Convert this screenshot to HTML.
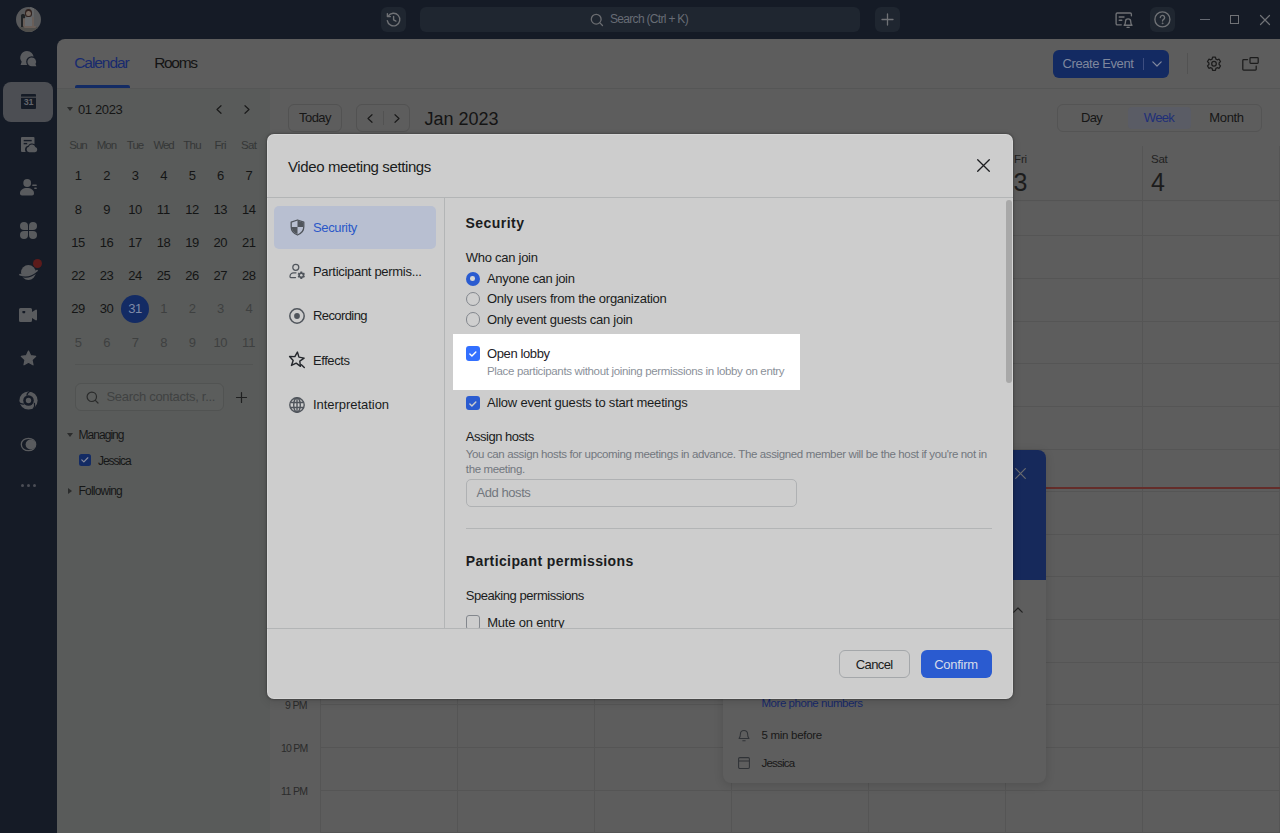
<!DOCTYPE html>
<html lang="en"><head>
<meta charset="utf-8">
<title>Video meeting settings</title>
<style>
*{box-sizing:border-box;margin:0;padding:0}
html,body{width:1280px;height:833px;overflow:hidden;background:#151b26}
body{position:relative;font-family:"Liberation Sans",sans-serif;color:#171717;-webkit-font-smoothing:antialiased}
.a{position:absolute}
.t{position:absolute;white-space:nowrap;line-height:20px;height:20px;font-size:13px}
svg{position:absolute;overflow:visible}
/* ---- app chrome ---- */
#main{left:57px;top:39px;width:1223px;height:794px;background:#5d5d5d;border-top-left-radius:8px;overflow:hidden}
#left{left:0;top:50px;width:213px;height:744px;background:#595b5a}
.hl{position:absolute;height:1px;background:#555555}
.vl{position:absolute;width:1px;background:#555555}
.ic{fill:#595b5e}
.tb{position:absolute;background:#1f2630;border-radius:6px}
/* ---- modal ---- */
#modal{left:267px;top:134px;width:746px;height:565px;background:#cdcdcd;border-radius:7px;box-shadow:inset 0 0 0 1px rgba(255,255,255,.18),0 0 2px 1px rgba(0,0,0,.2),0 3px 10px rgba(0,0,0,.12)}
.m{color:#1a1c20}
.g{color:#72777e}
</style>
</head>
<body>

<!-- ================= TITLE BAR ================= -->
<div class="tb" style="left:381px;top:7px;width:25px;height:25px"></div>
<div class="tb" style="left:420px;top:7px;width:440px;height:25px"></div>
<div class="tb" style="left:875px;top:7px;width:25px;height:25px"></div>
<div class="tb" style="left:1150px;top:7px;width:25px;height:25px"></div>
<div class="t" style="left: 610px; top: 9px; font-size: 12px; color: rgb(103, 108, 117); letter-spacing: -0.69px;">Search (Ctrl + K)</div>


<!-- title bar icons -->
<svg style="left:385px;top:11px" width="17" height="17" viewBox="0 0 17 17" fill="none" stroke="#707276" stroke-width="1.4" stroke-linecap="round" stroke-linejoin="round">
  <path d="M3.2 5.2A6.3 6.3 0 1 1 2.3 9.6"></path><path d="M2.4 2.6v3h3"></path><path d="M8.6 5.4v3.4l2.3 1.3"></path>
</svg>
<svg style="left:590px;top:13px" width="14" height="14" viewBox="0 0 14 14" fill="none" stroke="#6a6c70" stroke-width="1.3" stroke-linecap="round">
  <circle cx="6.2" cy="6.2" r="4.9"></circle><path d="M9.9 9.9l2.6 2.6"></path>
</svg>
<svg style="left:881px;top:13px" width="13" height="13" viewBox="0 0 13 13" fill="none" stroke="#707276" stroke-width="1.3" stroke-linecap="round">
  <path d="M6.5 1v11M1 6.5h11"></path>
</svg>
<svg style="left:1115px;top:12px" width="18" height="16" viewBox="0 0 18 16" fill="none" stroke="#707276" stroke-width="1.350" stroke-linecap="round" stroke-linejoin="round">
  <path d="M6.300 12.800H2.300a1.200 1.200 0 0 1-1.200-1.200V2.200A1.200 1.200 0 0 1 2.300 1h12.900a1.200 1.200 0 0 1 1.200 1.200v1.500"></path><path d="M4.200 5h4.800M4.200 8.200h2.600"></path>
  <path d="M9.200 13.200h7.800c-1-.900-1.300-1.900-1.300-3.800a2.600 2.600 0 0 0-5.200 0c0 1.900-.300 2.900-1.300 3.800z"></path><path d="M12 15.300h2.200"></path>
</svg>
<svg style="left:1154px;top:11px" width="17" height="17" viewBox="0 0 17 17" fill="none" stroke="#707276" stroke-width="1.350" stroke-linecap="round" stroke-linejoin="round">
  <circle cx="8.400" cy="8.400" r="7.500"></circle><path d="M6.300 6.600a2.150 2.150 0 1 1 3.300 1.800c-.800.500-1.100.900-1.100 1.600"></path><circle cx="8.500" cy="12.300" r=".600" fill="#707276" stroke-width=".500"></circle>
</svg>
<div class="a" style="left:1200px;top:19px;width:10px;height:1.4px;background:#666a72"></div>
<div class="a" style="left:1230px;top:15px;width:9px;height:9px;border:1.2px solid #707276"></div>
<svg style="left:1260px;top:15px" width="10" height="10" viewBox="0 0 10 10" fill="none" stroke="#707276" stroke-width="1.200" stroke-linecap="round"><path d="M.5.5l9 9M9.500.5l-9 9"></path></svg>

<!-- ================= SIDEBAR ================= -->
<div class="a" style="left:3px;top:82px;width:50px;height:40px;border-radius:8px;background:#4c4e53"></div>


<!-- avatar -->
<div class="a" style="left:16px;top:7px;width:25px;height:25px;border-radius:50%;overflow:hidden;background:#58595b">
  <div class="a" style="left:14px;top:0;width:4px;height:25px;background:#626466"></div>
  <div class="a" style="left:5px;top:7px;width:3.500px;height:13px;border-radius:1.500px 1.500px 0 0;background:#202326"></div>
  <div class="a" style="left:8.800px;top:1.800px;width:7.400px;height:8px;border-radius:50% 50% 40% 40%;background:#30221f"></div>
  <div class="a" style="left:10.300px;top:3.600px;width:4.600px;height:5.600px;border-radius:50%;background:#74675f"></div>
  <div class="a" style="left:7.500px;top:9.800px;width:10px;height:12px;border-radius:4px 4px 0 0;background:#686a6d"></div>
  <div class="a" style="left:7px;top:11px;width:2px;height:9px;border-radius:1px;background:#6a5f59"></div>
  <div class="a" style="left:15.500px;top:10px;width:2px;height:10px;border-radius:1px;background:#6a5f59"></div>
  <div class="a" style="left:0;top:20px;width:25px;height:5px;background:#4f4e4b"></div>
  <div class="a" style="left:8px;top:19px;width:12px;height:2px;border-radius:1px;background:#6a5f59"></div>
</div>
<!-- chat -->
<svg style="left:18px;top:49px" width="22" height="20" viewBox="0 0 22 20">
  <path class="ic" d="M9 2a6.700 6.700 0 0 0-5.300 10.800L2.600 16h7a6.700 6.700 0 0 0 6.100-7.300A6.700 6.700 0 0 0 9 2z"></path>
  <circle cx="13.800" cy="12.800" r="5.600" fill="#151b26"></circle>
  <path class="ic" d="M13.800 8.400a4.400 4.400 0 1 0 0 8.800h4.600l-.900-2.100a4.400 4.400 0 0 0-3.700-6.700z"></path>
</svg>
<!-- calendar (selected) -->
<svg style="left:21px;top:94px" width="15" height="16" viewBox="0 0 15 16">
  <rect x="0" y="0" width="15" height="15" rx="1" fill="#151b26"></rect>
  <rect x="0" y="2.600" width="15" height="1.200" fill="#4c4e53"></rect>
</svg>
<div class="t" style="left:21px;top:96px;width:15px;height:12px;line-height:12px;text-align:center;font-size:9px;font-weight:700;color:#63666c;letter-spacing:-.3px">31</div>
<!-- docs -->
<svg style="left:21px;top:137px" width="17" height="16" viewBox="0 0 17 16">
  <path class="ic" d="M0 1a1 1 0 0 1 1-1h11.500a1 1 0 0 1 1 1v6.200a4.600 4.600 0 0 0-6.400 1.500A4 4 0 0 0 4 12.500c0 .900.200 1.700.700 2.400H1a1 1 0 0 1-1-1z"></path>
  <rect x="2.700" y="2.900" width="8" height="1.400" fill="#151b26"></rect><rect x="2.700" y="5.900" width="3.500" height="1.400" fill="#151b26"></rect>
  <path class="ic" d="M8.200 15.200a2.800 2.800 0 0 1-.500-5.500 3.500 3.500 0 0 1 6.600.400 2.600 2.600 0 0 1-.300 5.100z"></path>
</svg>
<!-- contacts -->
<svg style="left:20px;top:179px" width="18" height="17" viewBox="0 0 18 17">
  <circle class="ic" cx="7.200" cy="4" r="3.900"></circle>
  <path class="ic" d="M0 14.200C0 11 3 9 7 9s7 2 7 5.200c0 1.300-.800 2.300-2 2.300H2c-1.200 0-2-1-2-2.300z"></path>
  <rect class="ic" x="12.200" y="5.600" width="4.600" height="1.300" rx=".4"></rect><rect class="ic" x="14.200" y="8.600" width="2.600" height="1.300" rx=".4"></rect>
</svg>
<!-- apps -->
<svg style="left:20px;top:222px" width="17" height="17" viewBox="0 0 17 17">
  <path class="ic" d="M4 0a4 4 0 0 1 4 4v4H4a4 4 0 0 1 0-8z"></path>
  <path class="ic" d="M13 0a4 4 0 0 1 0 8H9V4a4 4 0 0 1 4-4z"></path>
  <path class="ic" d="M4 17a4 4 0 0 1 0-8h4v4a4 4 0 0 1-4 4z"></path>
  <path class="ic" d="M13 17a4 4 0 0 1-4-4V9h4a4 4 0 0 1 0 8z"></path>
</svg>
<!-- planet -->
<svg style="left:18px;top:263px" width="21" height="20" viewBox="0 0 21 20">
  <circle class="ic" cx="10.400" cy="9.500" r="7.400"></circle>
  <path d="M2.300 12.800Q10.400 16.400 19 8.900" fill="none" stroke="#151b26" stroke-width="1.700" stroke-linecap="round"></path>
  <path d="M2 11.600Q10.400 15 19 7.600" fill="none" stroke="#595b5e" stroke-width="1.800" stroke-linecap="round"></path>
</svg>
<div class="a" style="left:32.800px;top:258.900px;width:9.200px;height:9.200px;border-radius:50%;background:#5c1b1b"></div>
<!-- video -->
<svg style="left:19px;top:308px" width="19" height="14" viewBox="0 0 19 14">
  <path class="ic" d="M0 1.500A1.500 1.500 0 0 1 1.500 0h10A1.500 1.500 0 0 1 13 1.500V4l3.600-2.300a.900.900 0 0 1 1.400.800v9a.900.900 0 0 1-1.400.800L13 10v2.500a1.500 1.500 0 0 1-1.500 1.500h-10A1.500 1.500 0 0 1 0 12.500z"></path>
  <rect x="3.400" y="3" width="2.800" height="2.200" rx=".6" fill="#151b26"></rect>
</svg>
<!-- star -->
<svg style="left:20px;top:350px" width="17" height="16" viewBox="0 0 17 16">
  <path class="ic" stroke="#595b5e" stroke-width="1.200" stroke-linejoin="round" d="M8.500 1l2.200 4.700 5 .600-3.700 3.500 1 5-4.500-2.500L4 14.800l1-5L1.300 6.300l5-.600z"></path>
</svg>
<!-- swirl -->
<svg style="left:19px;top:391px" width="19" height="19" viewBox="0 0 19 19">
  <circle class="ic" cx="9.500" cy="9.500" r="9.100"></circle>
  <circle cx="9.500" cy="9.500" r="5.300" fill="#151b26"></circle>
  <circle class="ic" cx="9.500" cy="9.500" r="2.700"></circle>
  <path d="M11.600-.300Q8.300 1.500 7.800 4.600" fill="none" stroke="#151b26" stroke-width="1.200"></path>
  <path d="M-.300 11.600Q2.500 13.600 5.400 13" fill="none" stroke="#151b26" stroke-width="1.200"></path>
  <path d="M15.400 11.800Q16.200 14.500 14.600 17.600" fill="none" stroke="#151b26" stroke-width="1.200"></path>
</svg>
<!-- moon -->
<svg style="left:20px;top:436.500px" width="17" height="15" viewBox="0 0 17 15">
  <ellipse cx="8.500" cy="7.500" rx="7.200" ry="6.200" fill="none" stroke="#595b5e" stroke-width="1.300"></ellipse>
  <circle class="ic" cx="10.600" cy="7.500" r="5"></circle>
</svg>
<!-- dots -->
<div class="a" style="left:21px;top:484px;width:3px;height:3px;border-radius:50%;background:#4b4e55"></div>
<div class="a" style="left:27px;top:484px;width:3px;height:3px;border-radius:50%;background:#4b4e55"></div>
<div class="a" style="left:33px;top:484px;width:3px;height:3px;border-radius:50%;background:#4b4e55"></div>

<!-- ================= MAIN ================= -->
<div id="main" class="a">
  <div id="left" class="a">

    <svg style="left:9.5px;top:18px" width="6" height="4" viewBox="0 0 6 4"><path d="M0 0h6L3 4z" fill="#2b2c2c"></path></svg>
    <div class="t" style="left: 21px; top: 10.5px; font-size: 13px; color: rgb(21, 21, 21); letter-spacing: -0.36px;">01 2023</div>
    <svg style="left:158.5px;top:16px" width="6" height="9" viewBox="0 0 6 9" fill="none" stroke="#1a1a1a" stroke-width="1.200" stroke-linecap="round" stroke-linejoin="round"><path d="M5 .700L1 4.500l4 3.800"></path></svg>
    <svg style="left:187px;top:16px" width="6" height="9" viewBox="0 0 6 9" fill="none" stroke="#1a1a1a" stroke-width="1.200" stroke-linecap="round" stroke-linejoin="round"><path d="M1 .700l4 3.800-4 3.800"></path></svg>

    <div class="t" style="left: 1px; width: 40px; text-align: center; top: 45.5px; font-size: 11.5px; color: rgb(53, 55, 55); letter-spacing: -0.92px;">Sun</div>
    <div class="t" style="left: 29.5px; width: 40px; text-align: center; top: 45.5px; font-size: 11.5px; color: rgb(53, 55, 55); letter-spacing: -0.89px;">Mon</div>
    <div class="t" style="left: 58px; width: 40px; text-align: center; top: 45.5px; font-size: 11.5px; color: rgb(53, 55, 55); letter-spacing: -1px;">Tue</div>
    <div class="t" style="left: 86.5px; width: 40px; text-align: center; top: 45.5px; font-size: 11.5px; color: rgb(53, 55, 55); letter-spacing: -1.15px;">Wed</div>
    <div class="t" style="left: 115px; width: 40px; text-align: center; top: 45.5px; font-size: 11.5px; color: rgb(53, 55, 55); letter-spacing: -0.71px;">Thu</div>
    <div class="t" style="left: 143.2px; width: 40px; text-align: center; top: 45.5px; font-size: 11.5px; color: rgb(53, 55, 55); letter-spacing: -0.64px;">Fri</div>
    <div class="t" style="left: 171.7px; width: 40px; text-align: center; top: 45.5px; font-size: 11.5px; color: rgb(53, 55, 55); letter-spacing: -0.66px;">Sat</div>
    <div class="a" style="left:64px;top:206px;width:28px;height:28px;border-radius:50%;background:#132b64"></div>
    <div class="t" style="left: 1px; width: 40px; text-align: center; top: 77px; font-size: 13px; color: rgb(20, 21, 21); letter-spacing: -0.73px;">1</div>
    <div class="t" style="left: 29.5px; width: 40px; text-align: center; top: 77px; font-size: 13px; color: rgb(20, 21, 21); letter-spacing: -0.73px;">2</div>
    <div class="t" style="left: 58px; width: 40px; text-align: center; top: 77px; font-size: 13px; color: rgb(20, 21, 21); letter-spacing: -0.73px;">3</div>
    <div class="t" style="left: 86.5px; width: 40px; text-align: center; top: 77px; font-size: 13px; color: rgb(20, 21, 21); letter-spacing: -0.73px;">4</div>
    <div class="t" style="left: 115px; width: 40px; text-align: center; top: 77px; font-size: 13px; color: rgb(20, 21, 21); letter-spacing: -0.73px;">5</div>
    <div class="t" style="left: 143.2px; width: 40px; text-align: center; top: 77px; font-size: 13px; color: rgb(20, 21, 21); letter-spacing: -0.73px;">6</div>
    <div class="t" style="left: 171.7px; width: 40px; text-align: center; top: 77px; font-size: 13px; color: rgb(20, 21, 21); letter-spacing: -0.73px;">7</div>
    <div class="t" style="left: 1px; width: 40px; text-align: center; top: 110.5px; font-size: 13px; color: rgb(20, 21, 21); letter-spacing: -0.73px;">8</div>
    <div class="t" style="left: 29.5px; width: 40px; text-align: center; top: 110.5px; font-size: 13px; color: rgb(20, 21, 21); letter-spacing: -0.73px;">9</div>
    <div class="t" style="left: 58px; width: 40px; text-align: center; top: 110.5px; font-size: 13px; color: rgb(20, 21, 21); letter-spacing: -0.48px;">10</div>
    <div class="t" style="left: 86.5px; width: 40px; text-align: center; top: 110.5px; font-size: 13px; color: rgb(20, 21, 21); letter-spacing: 0px;">11</div>
    <div class="t" style="left: 115px; width: 40px; text-align: center; top: 110.5px; font-size: 13px; color: rgb(20, 21, 21); letter-spacing: -0.48px;">12</div>
    <div class="t" style="left: 143.2px; width: 40px; text-align: center; top: 110.5px; font-size: 13px; color: rgb(20, 21, 21); letter-spacing: -0.48px;">13</div>
    <div class="t" style="left: 171.7px; width: 40px; text-align: center; top: 110.5px; font-size: 13px; color: rgb(20, 21, 21); letter-spacing: -0.48px;">14</div>
    <div class="t" style="left: 1px; width: 40px; text-align: center; top: 144px; font-size: 13px; color: rgb(20, 21, 21); letter-spacing: -0.48px;">15</div>
    <div class="t" style="left: 29.5px; width: 40px; text-align: center; top: 144px; font-size: 13px; color: rgb(20, 21, 21); letter-spacing: -0.48px;">16</div>
    <div class="t" style="left: 58px; width: 40px; text-align: center; top: 144px; font-size: 13px; color: rgb(20, 21, 21); letter-spacing: -0.48px;">17</div>
    <div class="t" style="left: 86.5px; width: 40px; text-align: center; top: 144px; font-size: 13px; color: rgb(20, 21, 21); letter-spacing: -0.48px;">18</div>
    <div class="t" style="left: 115px; width: 40px; text-align: center; top: 144px; font-size: 13px; color: rgb(20, 21, 21); letter-spacing: -0.48px;">19</div>
    <div class="t" style="left: 143.2px; width: 40px; text-align: center; top: 144px; font-size: 13px; color: rgb(20, 21, 21); letter-spacing: -0.48px;">20</div>
    <div class="t" style="left: 171.7px; width: 40px; text-align: center; top: 144px; font-size: 13px; color: rgb(20, 21, 21); letter-spacing: -0.48px;">21</div>
    <div class="t" style="left: 1px; width: 40px; text-align: center; top: 177.3px; font-size: 13px; color: rgb(20, 21, 21); letter-spacing: -0.48px;">22</div>
    <div class="t" style="left: 29.5px; width: 40px; text-align: center; top: 177.3px; font-size: 13px; color: rgb(20, 21, 21); letter-spacing: -0.48px;">23</div>
    <div class="t" style="left: 58px; width: 40px; text-align: center; top: 177.3px; font-size: 13px; color: rgb(20, 21, 21); letter-spacing: -0.48px;">24</div>
    <div class="t" style="left: 86.5px; width: 40px; text-align: center; top: 177.3px; font-size: 13px; color: rgb(20, 21, 21); letter-spacing: -0.48px;">25</div>
    <div class="t" style="left: 115px; width: 40px; text-align: center; top: 177.3px; font-size: 13px; color: rgb(20, 21, 21); letter-spacing: -0.48px;">26</div>
    <div class="t" style="left: 143.2px; width: 40px; text-align: center; top: 177.3px; font-size: 13px; color: rgb(20, 21, 21); letter-spacing: -0.48px;">27</div>
    <div class="t" style="left: 171.7px; width: 40px; text-align: center; top: 177.3px; font-size: 13px; color: rgb(20, 21, 21); letter-spacing: -0.48px;">28</div>
    <div class="t" style="left: 1px; width: 40px; text-align: center; top: 210px; font-size: 13px; color: rgb(20, 21, 21); letter-spacing: -0.48px;">29</div>
    <div class="t" style="left: 29.5px; width: 40px; text-align: center; top: 210px; font-size: 13px; color: rgb(20, 21, 21); letter-spacing: -0.48px;">30</div>
    <div class="t" style="left: 58px; width: 40px; text-align: center; top: 210px; font-size: 13px; color: rgb(127, 138, 168); letter-spacing: -0.48px;">31</div>
    <div class="t" style="left: 86.5px; width: 40px; text-align: center; top: 210px; font-size: 13px; color: rgb(62, 64, 64); letter-spacing: -0.73px;">1</div>
    <div class="t" style="left: 115px; width: 40px; text-align: center; top: 210px; font-size: 13px; color: rgb(62, 64, 64); letter-spacing: -0.73px;">2</div>
    <div class="t" style="left: 143.2px; width: 40px; text-align: center; top: 210px; font-size: 13px; color: rgb(62, 64, 64); letter-spacing: -0.73px;">3</div>
    <div class="t" style="left: 171.7px; width: 40px; text-align: center; top: 210px; font-size: 13px; color: rgb(62, 64, 64); letter-spacing: -0.73px;">4</div>
    <div class="t" style="left: 1px; width: 40px; text-align: center; top: 243.5px; font-size: 13px; color: rgb(62, 64, 64); letter-spacing: -0.73px;">5</div>
    <div class="t" style="left: 29.5px; width: 40px; text-align: center; top: 243.5px; font-size: 13px; color: rgb(62, 64, 64); letter-spacing: -0.73px;">6</div>
    <div class="t" style="left: 58px; width: 40px; text-align: center; top: 243.5px; font-size: 13px; color: rgb(62, 64, 64); letter-spacing: -0.73px;">7</div>
    <div class="t" style="left: 86.5px; width: 40px; text-align: center; top: 243.5px; font-size: 13px; color: rgb(62, 64, 64); letter-spacing: -0.73px;">8</div>
    <div class="t" style="left: 115px; width: 40px; text-align: center; top: 243.5px; font-size: 13px; color: rgb(62, 64, 64); letter-spacing: -0.73px;">9</div>
    <div class="t" style="left: 143.2px; width: 40px; text-align: center; top: 243.5px; font-size: 13px; color: rgb(62, 64, 64); letter-spacing: -0.48px;">10</div>
    <div class="t" style="left: 171.7px; width: 40px; text-align: center; top: 243.5px; font-size: 13px; color: rgb(62, 64, 64); letter-spacing: 0px;">11</div>

    <div class="hl" style="left:18px;top:275px;width:178px;background:#525453"></div>
    <div class="a" style="left:18px;top:294px;width:148.500px;height:27.500px;border-radius:6px;border:1px solid #515352;background:#5b5d5c"></div>
    <svg style="left:29px;top:302px" width="13" height="13" viewBox="0 0 13 13" fill="none" stroke="#2a2b2b" stroke-width="1.200" stroke-linecap="round"><circle cx="5.800" cy="5.800" r="4.700"></circle><path d="M9.300 9.300l2.700 2.700"></path></svg>
    <div class="t" style="left: 49.5px; top: 298px; font-size: 13px; color: rgb(64, 66, 66); letter-spacing: -0.3px;">Search contacts, r...</div>
    <svg style="left:179px;top:302.5px" width="11" height="11" viewBox="0 0 11 11" fill="none" stroke="#1f2020" stroke-width="1.200" stroke-linecap="round"><path d="M5.500.500v10M.500 5.500h10"></path></svg>
    <svg style="left:9.5px;top:344px" width="6" height="4" viewBox="0 0 6 4"><path d="M0 0h6L3 4z" fill="#2b2c2c"></path></svg>
    <div class="t" style="left: 21.5px; top: 336px; font-size: 12px; color: rgb(22, 23, 23); letter-spacing: -0.96px;">Managing</div>
    <div class="a" style="left:21.5px;top:364.7px;width:12px;height:12px;border-radius:2.500px;background:#132b64"></div>
    <svg style="left:23.7px;top:367.900px" width="7.600" height="5.700" viewBox="0 0 8 6" fill="none" stroke="#878b9c" stroke-width="1.250" stroke-linecap="round" stroke-linejoin="round"><path d="M.800 3l2.200 2.200L7.200.800"></path></svg>
    <div class="t" style="left: 41px; top: 361.5px; font-size: 12px; color: rgb(22, 23, 23); letter-spacing: -1.07px;">Jessica</div>
    <svg style="left:10.5px;top:399px" width="4" height="6" viewBox="0 0 4 6"><path d="M0 0v6l4-3z" fill="#2b2c2c"></path></svg>
    <div class="t" style="left: 21.5px; top: 392px; font-size: 12px; color: rgb(22, 23, 23); letter-spacing: -0.8px;">Following</div>

  </div>

  <!-- header -->
  <div class="hl" style="left:0;top:49px;width:1223px;background:#555656"></div>
  <div class="t" style="left: 17.2px; top: 14px; font-size: 15.5px; color: rgb(24, 42, 110); letter-spacing: -1.05px;">Calendar</div>
  <div class="a" style="left:18px;top:46px;width:54.500px;height:3px;border-radius:2px 2px 0 0;background:#132b64"></div>
  <div class="t" style="left: 97.2px; top: 14px; font-size: 15.5px; color: rgb(20, 20, 20); letter-spacing: -1.32px;">Rooms</div>
  <div class="a" style="left:995.5px;top:11px;width:116.500px;height:28px;border-radius:6px;background:#132a62"></div>
  <div class="t" style="left: 1005.5px; top: 15px; font-size: 13px; color: rgb(127, 135, 157); letter-spacing: -0.41px;">Create Event</div>
  <div class="a" style="left:1086px;top:19px;width:1px;height:12px;background:#3d4e80"></div>
  <svg style="left:1094.5px;top:22px" width="10" height="6" viewBox="0 0 10 6" fill="none" stroke="#7f879d" stroke-width="1.200" stroke-linecap="round" stroke-linejoin="round"><path d="M.800.800L5 5 9.200.800"></path></svg>
  <div class="vl" style="left:1130px;top:14px;height:21px;background:#525252"></div>
  <svg style="left:1149px;top:17px" width="16" height="16" viewBox="0 0 16 16" fill="none" stroke="#1c1c1c" stroke-width="1.250" stroke-linejoin="round">
    <path d="M6.600 1.200h2.800l.500 1.900 1.300.700 1.900-.600 1.400 2.400-1.400 1.400v1.500l1.400 1.400-1.400 2.400-1.900-.600-1.300.700-.500 1.900H6.600l-.500-1.900-1.300-.700-1.900.600-1.400-2.400 1.400-1.400V7l-1.400-1.400 1.400-2.400 1.900.600 1.300-.700z"></path><circle cx="8" cy="7.750" r="2.300"></circle>
  </svg>
  <svg style="left:1184.5px;top:18px" width="17" height="14" viewBox="0 0 17 14" fill="none" stroke="#1c1c1c" stroke-width="1.250" stroke-linejoin="round" stroke-linecap="round">
    <path d="M5.500 2.600H1.600a.800.800 0 0 0-.800.800v8.800a.800.800 0 0 0 .800.800h11.800a.800.800 0 0 0 .800-.800V9"></path><rect x="8" y=".700" width="8.200" height="5.600" rx=".800"></rect>
  </svg>

  <div class="hl" style="left:213px;top:161px;width:1010px;background:#545454"></div>
  <div class="hl" style="left:213px;top:162px;width:1010px;background:#5c5c5c"></div>
  <div class="hl" style="left:263px;top:196px;width:960px"></div>
  <div class="hl" style="left:263px;top:239px;width:960px"></div>
  <div class="hl" style="left:263px;top:282px;width:960px"></div>
  <div class="hl" style="left:263px;top:324px;width:960px"></div>
  <div class="hl" style="left:263px;top:367px;width:960px"></div>
  <div class="hl" style="left:263px;top:410px;width:960px"></div>
  <div class="hl" style="left:263px;top:452px;width:960px"></div>
  <div class="hl" style="left:263px;top:495px;width:960px"></div>
  <div class="hl" style="left:263px;top:537px;width:960px"></div>
  <div class="hl" style="left:263px;top:580px;width:960px"></div>
  <div class="hl" style="left:263px;top:623px;width:960px"></div>
  <div class="hl" style="left:263px;top:665px;width:960px"></div>
  <div class="hl" style="left:263px;top:708px;width:960px"></div>
  <div class="hl" style="left:263px;top:751px;width:960px"></div>
  <div class="hl" style="left:263px;top:793px;width:960px"></div>
  <div class="vl" style="left:263px;top:162px;height:632px"></div>
  <div class="vl" style="left:400px;top:107px;height:687px"></div>
  <div class="vl" style="left:537px;top:107px;height:687px"></div>
  <div class="vl" style="left:674px;top:107px;height:687px"></div>
  <div class="vl" style="left:811px;top:107px;height:687px"></div>
  <div class="vl" style="left:948px;top:107px;height:687px"></div>
  <div class="vl" style="left:1085px;top:107px;height:687px"></div>
  <div class="vl" style="left:1222px;top:107px;height:687px"></div>

  <div class="t" style="left: 957px; top: 110px; font-size: 11.5px; color: rgb(34, 34, 34); letter-spacing: -0.14px;">Fri</div>
  <div class="t" style="left:956.5px;top:129px;height:28px;line-height:28px;font-size:25px;color:#1c1c1c">3</div>
  <div class="t" style="left: 1094px; top: 110px; font-size: 11.5px; color: rgb(34, 34, 34); letter-spacing: -0.26px;">Sat</div>
  <div class="t" style="left:1094px;top:129px;height:28px;line-height:28px;font-size:25px;color:#1c1c1c">4</div>
  <div class="t" style="left: 228px; top: 656px; font-size: 10.5px; color: rgb(43, 43, 43); letter-spacing: -0.63px;">9 PM</div>
  <div class="t" style="left: 224px; top: 699px; font-size: 10.5px; color: rgb(43, 43, 43); letter-spacing: -0.77px;">10 PM</div>
  <div class="t" style="left: 224px; top: 741.5px; font-size: 10.5px; color: rgb(43, 43, 43); letter-spacing: -0.62px;">11 PM</div>
  <div class="hl" style="left:983px;top:448px;width:240px;height:2px;background:#642d2a"></div>


  <!-- event popover -->
  <div class="a" style="left:666px;top:411px;width:322.500px;height:333px;border-radius:8px;background:#5e5e5e;box-shadow:0 2px 10px rgba(0,0,0,.14);overflow:hidden">
    <div class="a" style="left:0;top:0;width:100%;height:130px;background:#16295b"></div>
  </div>
  <svg style="left:958px;top:428.5px" width="11" height="11" viewBox="0 0 11 11" fill="none" stroke="#6a6b6e" stroke-width="1.200" stroke-linecap="round"><path d="M.700.700l9.600 9.600M10.300.700L.700 10.300"></path></svg>
  <svg style="left:956px;top:567.5px" width="10" height="6" viewBox="0 0 10 6" fill="none" stroke="#222" stroke-width="1.200" stroke-linecap="round" stroke-linejoin="round"><path d="M.800 5.200L5 1l4.200 4.200"></path></svg>
  <div class="t" style="left: 704.5px; top: 653.5px; font-size: 11.5px; color: rgb(23, 41, 106); letter-spacing: -0.46px;">More phone numbers</div>
  <svg style="left:680.5px;top:689px" width="12" height="14" viewBox="0 0 12 14" fill="none" stroke="#303337" stroke-width="1.050" stroke-linecap="round" stroke-linejoin="round"><path d="M1 10.500h10c-1-1-1.400-2-1.400-4.500a3.600 3.600 0 0 0-7.200 0c0 2.500-.400 3.500-1.400 4.500z"></path><path d="M4.800 12.800h2.400"></path></svg>
  <div class="t" style="left: 704.5px; top: 686px; font-size: 11.5px; color: rgb(24, 24, 24); letter-spacing: -0.29px;">5 min before</div>
  <svg style="left:680.5px;top:718px" width="12" height="12" viewBox="0 0 12 12" fill="none" stroke="#303337" stroke-width="1.050" stroke-linejoin="round"><rect x=".600" y=".600" width="10.800" height="10.800" rx="1.200"></rect><path d="M.600 4h10.800"></path></svg>
  <div class="t" style="left: 704.5px; top: 714px; font-size: 11.5px; color: rgb(24, 24, 24); letter-spacing: -0.77px;">Jessica</div>


  <!-- view header -->
  <div class="a" style="left:231px;top:65px;width:53.500px;height:28px;border-radius:6px;border:1px solid #525252"></div>
  <div class="t" style="left: 242px; top: 69px; font-size: 13px; color: rgb(22, 22, 22); letter-spacing: -0.54px;">Today</div>
  <div class="a" style="left:298.5px;top:65px;width:54px;height:28px;border-radius:6px;border:1px solid #525252"></div>
  <div class="vl" style="left:325.5px;top:72px;height:14px;background:#525252"></div>
  <svg style="left:309.5px;top:74.5px" width="6" height="9" viewBox="0 0 6 9" fill="none" stroke="#1a1a1a" stroke-width="1.200" stroke-linecap="round" stroke-linejoin="round"><path d="M5 .700L1 4.500l4 3.800"></path></svg>
  <svg style="left:337px;top:74.5px" width="6" height="9" viewBox="0 0 6 9" fill="none" stroke="#1a1a1a" stroke-width="1.200" stroke-linecap="round" stroke-linejoin="round"><path d="M1 .700l4 3.800-4 3.800"></path></svg>
  <div class="t" style="left: 367.5px; top: 67.5px; height: 24px; line-height: 24px; font-size: 18px; color: rgb(20, 20, 20); letter-spacing: -0.01px;">Jan 2023</div>
  <div class="a" style="left:999.5px;top:65px;width:205.500px;height:28px;border-radius:6px;border:1px solid #545454"></div>
  <div class="a" style="left:1070.5px;top:68px;width:63px;height:22px;border-radius:4px;background:#5a5c65"></div>
  <div class="t" style="left: 1004.5px; width: 60px; text-align: center; top: 69px; color: rgb(22, 22, 22); letter-spacing: -0.71px;">Day</div>
  <div class="t" style="left: 1072px; width: 60px; text-align: center; top: 69px; color: rgb(30, 47, 120); letter-spacing: -0.62px;">Week</div>
  <div class="t" style="left: 1139.5px; width: 60px; text-align: center; top: 69px; color: rgb(22, 22, 22); letter-spacing: -0.33px;">Month</div>

</div>

<!-- ================= MODAL ================= -->
<div id="modal" class="a">

  <div class="t m" style="left: 21px; top: 22px; height: 22px; line-height: 22px; font-size: 15px; letter-spacing: -0.39px;">Video meeting settings</div>
  <svg style="left:709.5px;top:25px" width="13" height="13" viewBox="0 0 13 13" fill="none" stroke="#1c1d20" stroke-width="1.300" stroke-linecap="round"><path d="M.700.700l11.600 11.600M12.300.700L.700 12.300"></path></svg>
  <div class="hl" style="left:0;top:63px;width:746px;background:#b3b5b6"></div>
  <div class="vl" style="left:176.5px;top:64px;height:430px;background:#b3b5b6"></div>
  <div class="hl" style="left:0;top:494px;width:746px;background:#b3b5b6"></div>
  <!-- nav -->
  <div class="a" style="left:7px;top:72px;width:161.800px;height:42.500px;border-radius:5px;background:#b8bfd1"></div>

  <div class="t" style="left: 46px; top: 84.3px; font-size: 13px; color: rgb(42, 88, 200); letter-spacing: -0.37px;">Security</div>
  <div class="t" style="left: 46px; top: 127.8px; font-size: 13px; color: rgb(26, 28, 32); letter-spacing: -0.3px;">Participant permis...</div>
  <div class="t" style="left: 46px; top: 172.2px; font-size: 13px; color: rgb(26, 28, 32); letter-spacing: -0.59px;">Recording</div>
  <div class="t" style="left: 46px; top: 216.6px; font-size: 13px; color: rgb(26, 28, 32); letter-spacing: -0.43px;">Effects</div>
  <div class="t" style="left: 46px; top: 261px; font-size: 13px; color: rgb(26, 28, 32); letter-spacing: -0.04px;">Interpretation</div>

  <svg style="left:22.5px;top:84.8px" width="15" height="17" viewBox="0 0 15 17"><path d="M7.500 1L1.200 3.200v4.600c0 3.900 2.500 6.800 6.300 8.200 3.800-1.400 6.300-4.300 6.300-8.200V3.200z" fill="none" stroke="#50555c" stroke-width="1.300" stroke-linejoin="round"></path><path d="M7.500 1.500l5.800 2v4.600H7.500zM7.500 8.100H1.700c.200 3.400 2.500 5.900 5.800 7.200z" fill="#50555c"></path></svg>
  <svg style="left:22px;top:129.3px" width="17" height="17" viewBox="0 0 17 17" fill="none" stroke="#50555c" stroke-width="1.250" stroke-linecap="round" stroke-linejoin="round"><circle cx="6.800" cy="4.300" r="3"></circle><path d="M7 9.800H4.600a3.600 3.600 0 0 0-3.600 3.600v.400c0 .400.300.700.700.700H6.500"></path><path d="M11.38,8.51L13.22,8.51L13.39,9.51L14.09,9.91L15.03,9.56L15.95,11.15L15.17,11.80L15.17,12.60L15.95,13.25L15.03,14.84L14.09,14.49L13.39,14.89L13.22,15.89L11.38,15.89L11.21,14.89L10.51,14.49L9.57,14.84L8.65,13.25L9.43,12.60L9.43,11.80L8.65,11.15L9.57,9.56L10.51,9.91L11.21,9.51z" fill="#50555c" stroke="none"></path><circle cx="12.300" cy="12.200" r="1.300" fill="#cdcdcd" stroke="none"></circle></svg>
  <svg style="left:21.8px;top:174px" width="16" height="16" viewBox="0 0 16 16"><circle cx="8" cy="8" r="7.200" fill="none" stroke="#50555c" stroke-width="1.500"></circle><circle cx="8" cy="8" r="2.900" fill="#50555c"></circle></svg>
  <svg style="left:21.8px;top:218px" width="17" height="17" viewBox="0 0 17 17" fill="none" stroke="#24272c" stroke-width="1.400" stroke-linejoin="round" stroke-linecap="round"><path d="M8.40,0.04L9.94,5.10L15.13,6.10L10.80,9.12L11.45,14.37L7.23,11.18L2.45,13.42L4.18,8.43L0.57,4.57L5.85,4.67z"></path><path d="M12.400 12.700l2.900 2.900"></path></svg>
  <svg style="left:21.8px;top:263px" width="16" height="16" viewBox="0 0 16 16" fill="none" stroke="#50555c" stroke-width="1.400"><circle cx="8" cy="8" r="7.200"></circle><ellipse cx="8" cy="8" rx="3.300" ry="7.200"></ellipse><path d="M8 .800v14.400M1.500 5.500h13M1.500 10.500h13"></path></svg>


  <!-- content -->
  <div class="a" style="left:186px;top:200px;width:347px;height:56px;background:#ffffff"></div>
  <div class="t m" style="left: 198.5px; top: 78px; height: 22px; line-height: 22px; font-size: 14px; font-weight: 700; letter-spacing: 0.47px;">Security</div>
  <div class="t m" style="left: 198.7px; top: 113.7px; letter-spacing: -0.26px;">Who can join</div>
  <div class="a" style="left:198.5px;top:137.55px;width:14.500px;height:14.500px;border-radius:50%;background:#2a5bd0"></div><div class="a" style="left:203.45px;top:142.3px;width:4.600px;height:4.600px;border-radius:50%;background:#d6d6d6"></div>
  <div class="t m" style="left: 220px; top: 134.8px; letter-spacing: -0.33px;">Anyone can join</div>
  <div class="a" style="left:198.5px;top:157.95px;width:14.500px;height:14.500px;border-radius:50%;border:1px solid #83878d;background:#cfcfcf"></div>
  <div class="t m" style="left: 220px; top: 155.2px; letter-spacing: -0.26px;">Only users from the organization</div>
  <div class="a" style="left:198.5px;top:178.45px;width:14.500px;height:14.500px;border-radius:50%;border:1px solid #83878d;background:#cfcfcf"></div>
  <div class="t m" style="left: 220px; top: 175.7px; letter-spacing: -0.27px;">Only event guests can join</div>
  <div class="a" style="left:198.7px;top:212.35px;width:14.500px;height:14.500px;border-radius:3px;background:#3370ff"></div><svg style="left:202.300px;top:216.900px" width="7.700" height="6" viewBox="0 0 9 7" fill="none" stroke="#ffffff" stroke-width="1.650" stroke-linecap="round" stroke-linejoin="round"><path d="M1 3.500l2.400 2.400L8 1.100"></path></svg>
  <div class="t" style="left: 220px; top: 209.6px; color: rgb(31, 35, 41); letter-spacing: -0.38px;">Open lobby</div>
  <div class="t" style="left: 220px; top: 226.8px; font-size: 11.5px; color: rgb(139, 145, 154); letter-spacing: -0.34px;">Place participants without joining permissions in lobby on entry</div>
  <div class="a" style="left:198.7px;top:261.95px;width:14.500px;height:14.500px;border-radius:3px;background:#2a5bd0"></div><svg style="left:202.300px;top:266.500px" width="7.700" height="6" viewBox="0 0 9 7" fill="none" stroke="#cdcdcd" stroke-width="1.650" stroke-linecap="round" stroke-linejoin="round"><path d="M1 3.500l2.400 2.400L8 1.100"></path></svg>
  <div class="t m" style="left: 220px; top: 259.2px; letter-spacing: -0.21px;">Allow event guests to start meetings</div>
  <div class="t m" style="left: 198.8px; top: 293.1px; letter-spacing: -0.48px;">Assign hosts</div>
  <div class="t g" style="left: 198.8px; top: 310.3px; font-size: 11.5px; letter-spacing: -0.37px;">You can assign hosts for upcoming meetings in advance. The assigned member will be the host if you're not in</div>
  <div class="t g" style="left: 198.8px; top: 324.6px; font-size: 11.5px; letter-spacing: -0.36px;">the meeting.</div>
  <div class="a" style="left:199px;top:345px;width:330.500px;height:28px;border-radius:5px;border:1px solid #afb1b3"></div>
  <div class="t g" style="left: 209.5px; top: 349px; letter-spacing: -0.43px;">Add hosts</div>
  <div class="hl" style="left:199px;top:394px;width:526px;background:#b3b5b6"></div>
  <div class="t m" style="left: 198.8px; top: 416.4px; height: 22px; line-height: 22px; font-size: 14px; font-weight: 700; letter-spacing: 0.4px;">Participant permissions</div>
  <div class="t m" style="left: 198.8px; top: 451.7px; letter-spacing: -0.46px;">Speaking permissions</div>
  <div class="a" style="left:177px;top:478px;width:560px;height:16px;overflow:hidden">
    <div class="a" style="left:21.7px;top:3.15px;width:14.500px;height:14.500px;border-radius:3px;border:1px solid #83878d"></div>
    <div class="t m" style="left: 43.2px; top: 1.4px; letter-spacing: -0.19px;">Mute on entry</div>
  </div>
  <!-- scrollbar -->
  <div class="a" style="left:738.5px;top:66px;width:6px;height:183px;border-radius:3px;background:#a8a8a8"></div>
  <!-- footer -->
  <div class="a" style="left:572px;top:515.7px;width:70.500px;height:28.500px;border-radius:6px;border:1px solid #a4a7aa"></div>
  <div class="t m" style="left: 577.2px; width: 60px; text-align: center; top: 521px; letter-spacing: -0.58px;">Cancel</div>
  <div class="a" style="left:653.5px;top:515.7px;width:71px;height:28.500px;border-radius:6px;background:#2a5bd0"></div>
  <div class="t" style="left: 659px; width: 60px; text-align: center; top: 521px; color: rgb(214, 219, 234); letter-spacing: -0.29px;">Confirm</div>

</div>



</body></html>
